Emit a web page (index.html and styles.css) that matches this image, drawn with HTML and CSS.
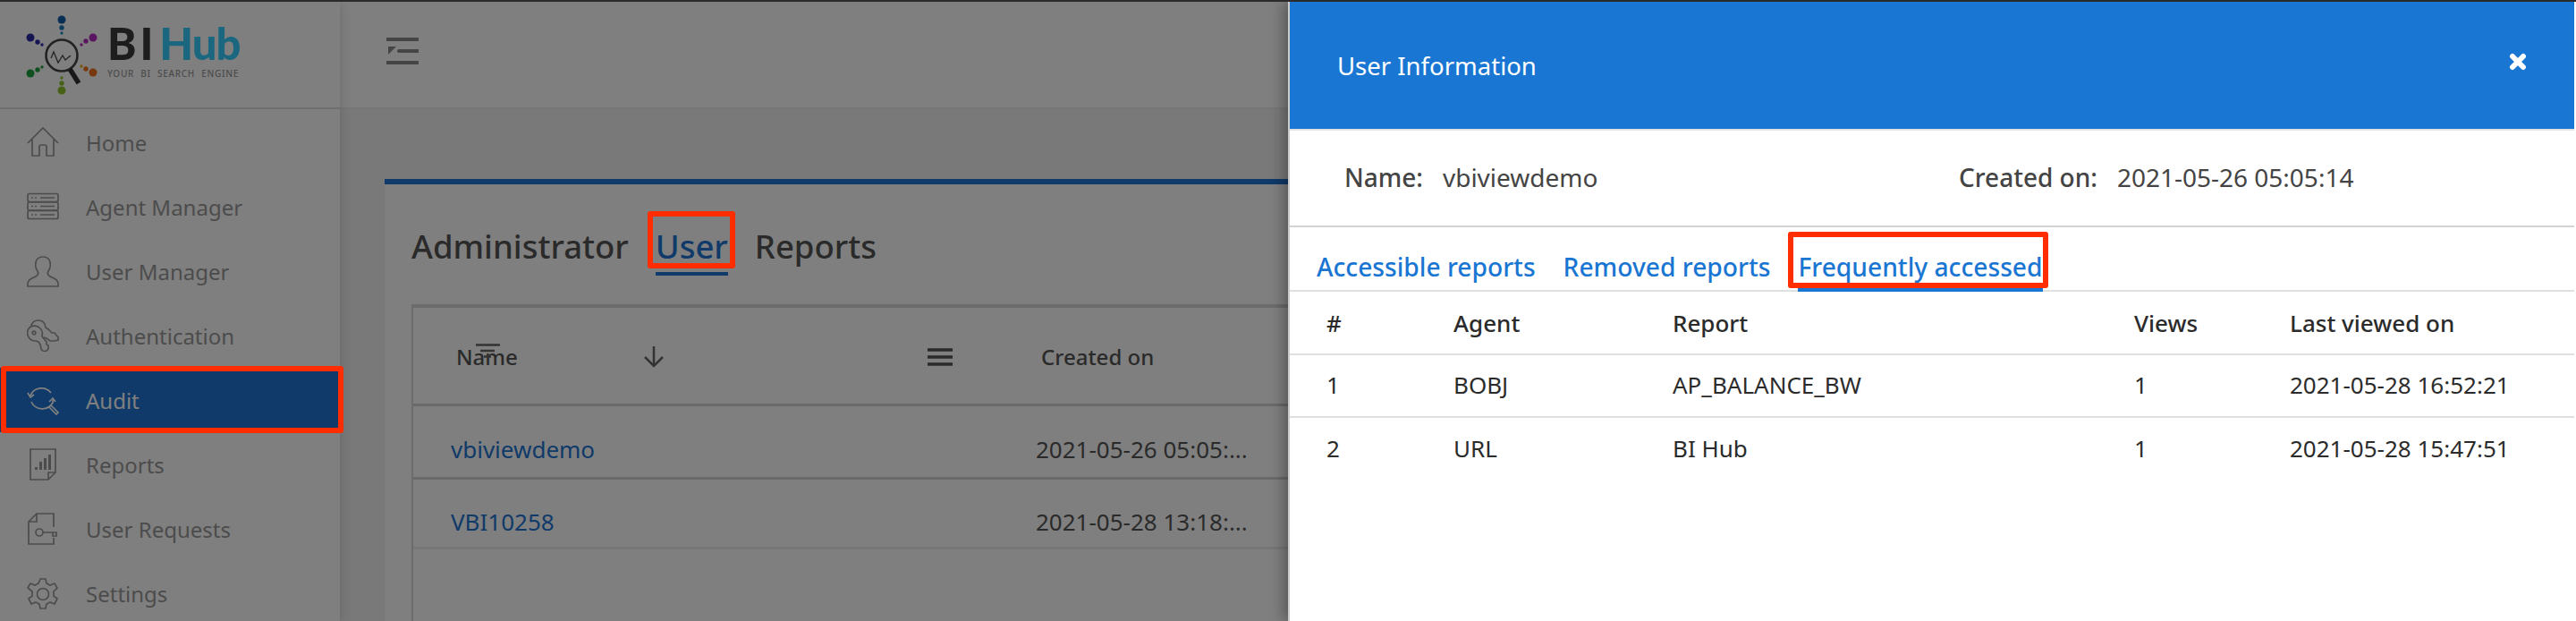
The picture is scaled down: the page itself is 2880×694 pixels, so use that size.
FILE: index.html
```html
<!DOCTYPE html>
<html lang="en">
<head>
    <meta charset="UTF-8">
    <title>BI Hub</title>
    <link rel="stylesheet" href="styles.css">
</head>
<body>
<div class="app">
    <aside class="sidebar">
        <div class="brand">
            <svg class="brand-mark" width="120" height="118" viewBox="0 2 120 118">
                <g fill="#0f5da8"><circle cx="69" cy="22" r="4.5"/><circle cx="69" cy="31" r="2.7" fill="#1a7ab8"/><circle cx="69" cy="37" r="1.7" fill="#1f8fc4"/></g>
                <g fill="#2a2aa8"><circle cx="34" cy="42" r="4.5"/><circle cx="42" cy="47" r="2.7"/><circle cx="47" cy="50" r="1.7"/></g>
                <g fill="#b52fc0"><circle cx="104" cy="42" r="4.5"/><circle cx="96" cy="46" r="2.7"/><circle cx="91" cy="50" r="1.7"/></g>
                <g fill="#1fa33c"><circle cx="34" cy="82" r="4.5"/><circle cx="42" cy="78" r="2.7"/><circle cx="47" cy="75" r="1.7"/></g>
                <g fill="#f0711c"><circle cx="104" cy="81" r="4.5"/><circle cx="96" cy="77" r="2.7"/><circle cx="91" cy="74" r="1.7" fill="#f0a81c"/></g>
                <g fill="#8fc42e"><circle cx="69" cy="101" r="4.5"/><circle cx="69" cy="93" r="2.7"/><circle cx="69" cy="87" r="1.7"/></g>
                <circle cx="69" cy="62" r="17.5" fill="none" stroke="#444" stroke-width="2.6"/>
                <path d="M78 77l10 16" stroke="#333" stroke-width="5.5" fill="none"/>
                <path d="M57 65l3-7 5 12 5-8 3 5 6-5" stroke="#444" stroke-width="1.3" fill="none"/>
            </svg>
            <div class="brand-text">
                <div class="brand-name"><span class="brand-bi">BI</span><span class="brand-hub">Hub</span></div>
                <div class="brand-tag">YOUR BI SEARCH ENGINE</div>
            </div>
        </div>
        <nav class="menu">
            <a class="menu-item">
                <svg class="menu-icon" viewBox="0 0 36 36"><path d="M1 19L18 2l17 17M6 15v18h8V23a2 2 0 0 1 2-2h4a2 2 0 0 1 2 2v10h8V15"/></svg>
                Home
            </a>
            <a class="menu-item">
                <svg class="menu-icon" viewBox="0 0 36 36"><rect x="1" y="3.500" width="34" height="9" rx="2"/><rect x="1" y="13" width="34" height="9" rx="2"/><rect x="1" y="22.500" width="34" height="9" rx="2"/><path d="M5 8h2m2 0h2m4 0h16M5 17.500h2m2 0h2m4 0h16M5 27h2m2 0h2m4 0h16"/></svg>
                Agent Manager
            </a>
            <a class="menu-item">
                <svg class="menu-icon" viewBox="0 0 36 36"><path d="M1 35v-3c0-5 5-6 9-8 3-1.500 3-4 2-6-2-3-3-6-2-10 1-4 4-6 8-6s7 2 8 6c1 4 0 7-2 10-1 2-1 4.500 2 6 4 2 9 3 9 8v3z"/></svg>
                User Manager
            </a>
            <a class="menu-item">
                <svg class="menu-icon" viewBox="0 0 36 36"><path d="M5 8C5 3 9 1 13 1s8 3 8 8l3 2 4 4 3 0 4 5v3l-4 1-5 0-4-3-3-1"/><path d="M3 9a9 9 0 0 1 12 1c2 2 3 5 2 8v1l5 6v3l2 1v4l-2 2-3 1-3-3-1-5-2-3-3-1a9 9 0 0 1-7-15z"/><circle cx="8" cy="15" r="1.800"/></svg>
                Authentication
            </a>
            <a class="menu-item active">
                <svg class="menu-icon" viewBox="0 0 36 36"><path d="M27 10A13.500 13.500 0 0 0 4 13M1 10l3 5 4-3M29 18v3a13.500 13.500 0 0 1-24-1M25 20l4-4 3 4M25 26l8 8 2-2-8-8"/></svg>
                Audit
                <span class="mark mark-audit"></span>
            </a>
            <a class="menu-item">
                <svg class="menu-icon" viewBox="0 0 36 36"><path d="M4 1h28v26l-8 8H4zM32 27h-8v8"/><path class="fill" d="M9 21h3v3H9zM14 15h3v9h-3zM19 11h3v13h-3zM24 7h3v17h-3z"/></svg>
                Reports
            </a>
            <a class="menu-item">
                <svg class="menu-icon" viewBox="0 0 36 36"><path d="M30 16V1H11L2 10v25h28v-7M11 1v9H2"/><circle cx="14" cy="22" r="4"/><path d="M18 22h15v4h-4v-4"/></svg>
                User Requests
            </a>
            <a class="menu-item">
                <svg class="menu-icon" viewBox="0 0 36 36"><circle cx="18" cy="18" r="6.500"/><path d="M15 1h6l1 5 4 2 5-2 3 5-4 4v5l4 3-3 6-5-2-4 2-1 5h-6l-1-5-4-2-5 2-3-6 4-3v-5L1 11l3-5 5 2 4-2z"/></svg>
                Settings
            </a>
        </nav>
    </aside>

    <main class="main">
        <header class="topbar">
            <svg class="toggle" width="36" height="30" viewBox="0 0 36 30"><path d="M1 2h34M14 15h21M1 28h34" stroke="#8a8a8a" stroke-width="4" stroke-linecap="round" fill="none"/><path d="M2 10l9 0-9 9z" fill="#8a8a8a"/></svg>
        </header>
        <section class="card">
            <div class="card-tabs">
                <a class="card-tab">Administrator</a>
                <a class="card-tab current">User<span class="mark mark-user"></span></a>
                <a class="card-tab">Reports</a>
            </div>
            <div class="grid">
                <div class="grid-head">
                    <div class="col-name">
                        <span>Name</span>
                        <svg class="col-lines" width="27" height="16" viewBox="0 0 27 16"><path d="M0 1.500h27M5 8h16M9 14.500h8" stroke="#666" stroke-width="2.500" fill="none"/></svg>
                        <svg class="col-arrow" width="26" height="24" viewBox="0 0 26 24"><path d="M13 0v22M3 12l10 10 10-10" stroke="#666" stroke-width="2.500" fill="none"/></svg>
                        <svg class="col-menu" width="28" height="20" viewBox="0 0 28 20"><path d="M0 2h28M0 10h28M0 18h28" stroke="#555" stroke-width="3.500" fill="none"/></svg>
                    </div>
                    <div class="col-date">Created on</div>
                </div>
                <div class="grid-row">
                    <a class="user-link">vbiviewdemo</a>
                    <div class="col-date">2021-05-26 05:05:...</div>
                </div>
                <div class="grid-row last">
                    <a class="user-link">VBI10258</a>
                    <div class="col-date">2021-05-28 13:18:...</div>
                </div>
            </div>
        </section>
    </main>
</div>

<div class="backdrop"></div>

<div class="panel">
    <div class="panel-head">
        <span>User Information</span>
        <svg width="20" height="20" viewBox="0 0 20 20"><path d="M4 4l12 12M16 4L4 16" stroke="#fff" stroke-width="6" stroke-linecap="round" fill="none"/></svg>
    </div>
    <div class="panel-info">
        <div class="info-name"><b>Name:</b><span>vbiviewdemo</span></div>
        <div class="info-created"><b>Created on:</b><span>2021-05-26 05:05:14</span></div>
    </div>
    <div class="panel-tabs">
        <a class="panel-tab">Accessible reports</a>
        <a class="panel-tab">Removed reports</a>
        <a class="panel-tab selected">Frequently accessed<span class="mark mark-freq"></span></a>
    </div>
    <table class="report-table">
        <thead>
            <tr><th class="c1">#</th><th class="c2">Agent</th><th class="c3">Report</th><th class="c4">Views</th><th>Last viewed on</th></tr>
        </thead>
        <tbody>
            <tr><td>1</td><td>BOBJ</td><td>AP_BALANCE_BW</td><td>1</td><td>2021-05-28 16:52:21</td></tr>
            <tr><td>2</td><td>URL</td><td>BI Hub</td><td>1</td><td>2021-05-28 15:47:51</td></tr>
        </tbody>
    </table>
</div>
</body>
</html>
```

FILE: styles.css
```css
* {
    margin: 0;
    padding: 0;
    box-sizing: border-box;
}
html, body {
    height: 694px;
    overflow: hidden;
}
body {
    font-family: "Noto Sans", "Open Sans", sans-serif;
    background: #f2f2f2;
    border-top: 2px solid #2a2a2a;
    position: relative;
}
.app {
    display: flex;
    height: 692px;
}

/* sidebar */
.sidebar {
    width: 380px;
    flex: none;
    background: #fff;
    box-shadow: 2px 0 12px rgba(0, 0, 0, .12);
    position: relative;
}
.brand {
    height: 120px;
    border-bottom: 2px solid #dcdcdc;
    display: flex;
}
.brand-mark {
    flex: none;
}
.brand-text {
    width: 148px;
    padding-top: 21px;
    font-family: Lato, sans-serif;
}
.brand-name {
    display: flex;
    gap: 3px;
    font-size: 49px;
    font-weight: 900;
    line-height: 50px;
    white-space: nowrap;
}
.brand-bi {
    color: #3a3a3a;
    letter-spacing: 4px;
}
.brand-hub {
    color: #36cfff;
    letter-spacing: -1px;
}
.brand-tag {
    font-family: "Noto Sans", sans-serif;
    font-size: 10px;
    font-weight: 500;
    color: #999;
    letter-spacing: .7px;
    word-spacing: 4px;
    white-space: nowrap;
    margin-top: 2px;
}
.menu {
    padding-top: 1px;
}
.menu-item {
    height: 72px;
    display: flex;
    align-items: center;
    gap: 30px;
    padding-left: 30px;
    font-size: 24px;
    color: #999;
    position: relative;
}
.menu-item:last-child {
    height: 65px;
    padding-top: 8px;
}
.menu-item.active {
    background: #2175d2;
    color: #fff;
}
.menu-icon {
    width: 36px;
    height: 36px;
    flex: none;
    fill: none;
    stroke: #999;
    stroke-width: 1.700;
}
.menu-icon .fill {
    fill: #999;
    stroke: none;
}
.active .menu-icon {
    stroke: #fff;
}

/* main area */
.main {
    flex: 1;
    min-width: 0;
}
.topbar {
    height: 120px;
    background: #fff;
    border-bottom: 2px solid #eee;
    padding: 40px 0 0 52px;
}
.card {
    margin: 78px 0 0 50px;
    height: 494px;
    background: #fff;
    border-top: 6px solid #2175d2;
    padding: 30px 0 0 30px;
}
.card-tabs {
    display: flex;
    gap: 30px;
    height: 104px;
    font-size: 36.500px;
    font-weight: 500;
    color: #555;
}
.card-tab {
    height: 72px;
    line-height: 78px;
    position: relative;
}
.card-tab.current {
    color: #2175d2;
    border-bottom: 4px solid #2175d2;
}
.grid {
    border-left: 2px solid #d8d8d8;
    border-top: 4px solid #d8d8d8;
    height: 354px;
    font-size: 26px;
    color: #555;
}
.grid-head, .grid-row {
    display: flex;
    align-items: center;
    border-bottom: 3px solid #d4d4d4;
}
.grid-head {
    height: 110px;
    font-size: 24px;
    font-weight: 500;
    padding: 2px 0 0 48px;
}
.grid-row {
    height: 82px;
    padding: 16px 0 0 42px;
}
.grid-row.last {
    height: 78px;
    padding-top: 19px;
    border-bottom-color: #eee;
}
.col-name {
    width: 654px;
    flex: none;
    display: flex;
    align-items: center;
}
.col-lines {
    margin-left: -47px;
    margin-top: -14px;
}
.col-arrow {
    margin-left: 159px;
    margin-top: 0;
}
.col-menu {
    margin-left: 293px;
    margin-top: 0;
}
.user-link {
    width: 654px;
    flex: none;
    color: #2175d2;
}

/* dark layer and the panel above it */
.backdrop {
    position: absolute;
    inset: 0;
    background: rgba(0, 0, 0, .5);
    z-index: 5;
}
.panel {
    position: absolute;
    top: 0;
    left: 1440px;
    right: 0;
    bottom: 0;
    z-index: 6;
    background: #fff;
    border-left: 2px solid #ccc;
    border-right: 2px solid #fff;
    box-shadow: -4px 0 16px rgba(0, 0, 0, .35);
}
.panel-head {
    height: 142px;
    background: #1976d2;
    color: #fff;
    font-size: 27.500px;
    display: flex;
    align-items: center;
    justify-content: space-between;
    padding: 0 53px 0 53px;
}
.panel-head svg {
    margin-top: -8px;
}
.panel-info {
    height: 110px;
    border-top: 2px solid #e2e2e2;
    border-bottom: 2px solid #d2d2d2;
    display: flex;
    align-items: center;
    padding: 0 0 3px 61px;
    font-size: 28px;
    color: #444;
}
.panel-info b {
    font-weight: 500;
    margin-right: 22px;
}
.info-name {
    width: 687px;
}
.panel-tabs {
    height: 72px;
    border-bottom: 2px solid #e0e0e0;
    display: flex;
    gap: 31px;
    padding-left: 30px;
    font-size: 28.200px;
    font-weight: 500;
    color: #1976d2;
}
.panel-tab {
    height: 72px;
    padding-top: 24px;
    line-height: 40px;
    position: relative;
}
.panel-tab.selected {
    border-bottom: 4px solid #1976d2;
}
.report-table {
    width: 100%;
    border-collapse: collapse;
    table-layout: fixed;
    font-size: 26px;
    color: #2b2b2b;
}
.report-table th {
    height: 70px;
    text-align: left;
    font-weight: 500;
    border-bottom: 2px solid #e0e0e0;
    padding-left: 41px;
}
.report-table td {
    height: 70px;
    padding: 0 0 2px 41px;
}
.report-table tbody tr:first-child td {
    border-bottom: 2px solid #e0e0e0;
}
.c1 { width: 142px; }
.c2 { width: 245px; }
.c3 { width: 516px; }
.c4 { width: 174px; }

/* red annotation boxes */
.mark {
    position: absolute;
    border: 6px solid #ff2d00;
    border-radius: 3px;
    z-index: 10;
}
.mark-audit {
    left: 1px;
    top: -2px;
    width: 383px;
    height: 75px;
}
.mark-user {
    left: -9px;
    top: 0;
    width: 98px;
    height: 64px;
}
.mark-freq {
    left: -11px;
    top: 5px;
    width: 291px;
    height: 63px;
}
```
